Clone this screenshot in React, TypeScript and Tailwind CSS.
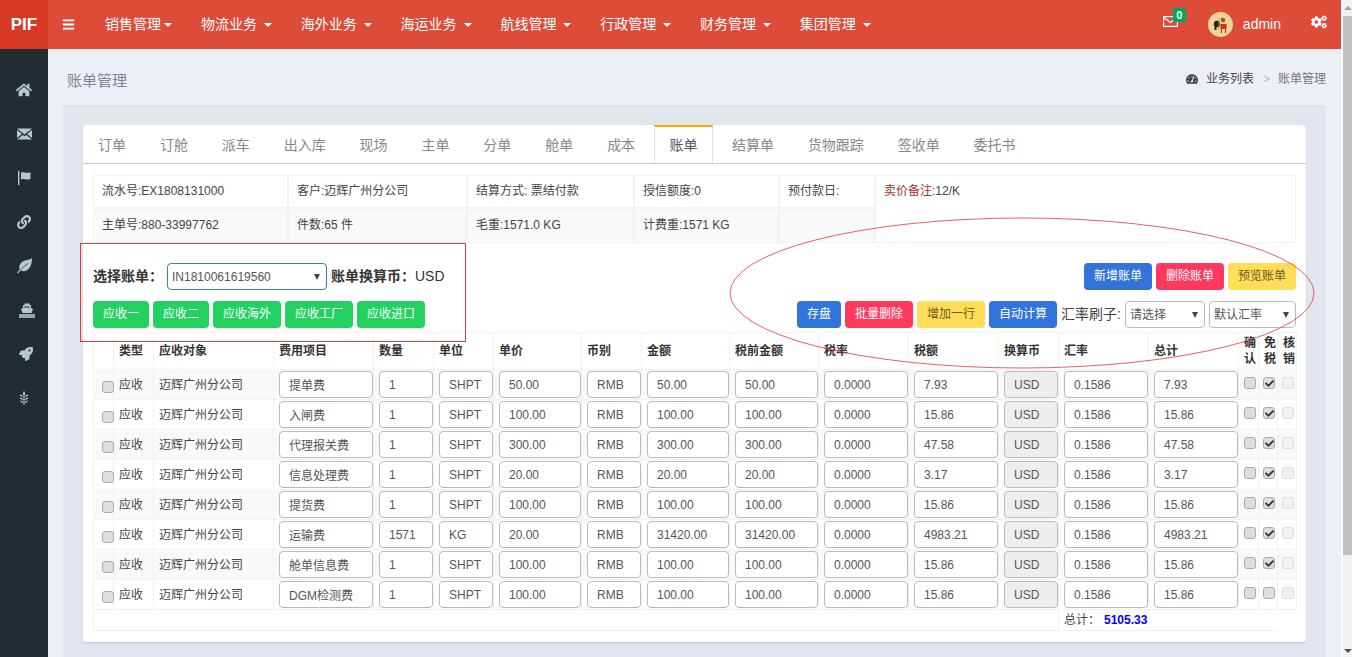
import React from "react";
import { FaHome, FaLink, FaRocket, FaBars, FaTachometerAlt, FaCogs, FaCheck } from "react-icons/fa";

const navItems = ["销售管理", "物流业务", "海外业务", "海运业务", "航线管理", "行政管理", "财务管理", "集团管理"];
const tabs = ["订单", "订舱", "派车", "出入库", "现场", "主单", "分单", "舱单", "成本", "账单", "结算单", "货物跟踪", "签收单", "委托书"];
const heads = ["", "类型", "应收对象", "费用项目", "数量", "单位", "单价", "币别", "金额", "税前金额", "税率", "税额", "换算币", "汇率", "总计"];

type Row = [string, string, string, string, string, string, string, boolean];
const rows: Row[] = [
  ["提单费", "1", "SHPT", "50.00", "50.00", "7.93", "7.93", true],
  ["入闸费", "1", "SHPT", "100.00", "100.00", "15.86", "15.86", true],
  ["代理报关费", "1", "SHPT", "300.00", "300.00", "47.58", "47.58", true],
  ["信息处理费", "1", "SHPT", "20.00", "20.00", "3.17", "3.17", true],
  ["提货费", "1", "SHPT", "100.00", "100.00", "15.86", "15.86", true],
  ["运输费", "1571", "KG", "20.00", "31420.00", "4983.21", "4983.21", true],
  ["舱单信息费", "1", "SHPT", "100.00", "100.00", "15.86", "15.86", true],
  ["DGM检测费", "1", "SHPT", "100.00", "100.00", "15.86", "15.86", false],
];

const cell = "border border-[#f2f2f2]";

function Field({ value, gray }: { value: string; gray?: boolean }) {
  return (
    <td className={`${cell} p-0 pt-px pl-[5px] align-top`}>
      <input
        readOnly
        value={value}
        className={`block w-full h-[27px] rounded-[4px] border border-[#bbbbbb] pl-[9px] text-[12px] text-[#555] ${gray ? "bg-[#eeeeee]" : "bg-white"}`}
      />
    </td>
  );
}

function Box({ checked, disabled, className }: { checked?: boolean; disabled?: boolean; className?: string }) {
  return (
    <span
      className={`flex items-center justify-center w-[12px] h-[12px] rounded-[3px] border ${disabled ? "border-[#dddddd] bg-[#f2f2f2]" : "border-[#aaaaaa] bg-[#dedede]"} ${className ?? ""}`}
    >
      {checked && <FaCheck className="text-[9px] text-[#333]" />}
    </span>
  );
}

function Btn({ label, tone }: { label: string; tone: "blue" | "red" | "yellow" | "green" }) {
  const tones = {
    blue: "bg-[#3273dc] text-white",
    red: "bg-[#ff3860] text-white",
    yellow: "bg-[#ffdd57] text-[#6b5a23]",
    green: "bg-[#23d160] text-white",
  };
  return (
    <button className={`h-[27px] px-[10px] rounded-[4px] text-[12px] leading-[27px] ${tones[tone]}`}>{label}</button>
  );
}

function Pick({ value, widthClass, border, pad }: { value: string; widthClass: string; border: string; pad: string }) {
  return (
    <div className={`relative h-[27px] ${widthClass}`}>
      <select className={`block appearance-none w-full h-full rounded-[4px] border ${border} ${pad} bg-white text-[12px] text-[#555]`}>
        <option>{value}</option>
      </select>
      <span className="absolute right-[7px] top-[11px] border-x-[3px] border-t-[6px] border-x-transparent border-t-[#444] pointer-events-none" />
    </div>
  );
}

function Avatar() {
  return (
    <svg viewBox="0 0 25 25" className="w-[25px] h-[25px]">
      <circle cx="12.5" cy="12.5" r="12.5" fill="#ecd596" />
      <circle cx="9" cy="12" r="3.2" fill="#222" />
      <rect x="6.5" y="11" width="2" height="7" fill="#222" />
      <circle cx="15" cy="8" r="2.3" fill="#8a5a2c" />
      <rect x="12.5" y="12" width="6" height="5" fill="#e2231a" />
      <rect x="13" y="17" width="1" height="4" fill="#6b4a2a" />
      <rect x="17" y="17" width="1" height="4" fill="#6b4a2a" />
      <rect x="10.5" y="6" width="1" height="12" fill="#c9a070" />
    </svg>
  );
}

function MailOutline() {
  return (
    <svg viewBox="0 0 15 11" className="w-[15px] h-[11px]" fill="none" stroke="white" strokeWidth="1.2">
      <rect x="0.6" y="0.6" width="13.8" height="9.8" />
      <path d="M0.6 1.2 7.5 6.500 14.400 1.200" />
    </svg>
  );
}

function SideMail() {
  return (
    <svg viewBox="0 0 15 12" className="w-[15px] h-[12px]" fill="#b8c7ce">
      <path d="M0 0.500h15L7.500 6.500z" />
      <path d="M0 2 5 6 0 10z" />
      <path d="M15 2 10 6l5 4z" />
      <path d="M0 11.500 5.800 7l1.700 1.300L9.200 7 15 11.500z" />
    </svg>
  );
}

function SideFlag() {
  return (
    <svg viewBox="0 0 13 14" className="w-[13px] h-[14px]" fill="#b8c7ce">
      <rect x="0" y="0" width="1.400" height="14" />
      <path d="M3 1.500C6 0.500 8 2.800 12.500 1.200V8C8 9.500 6 7.200 3 8.500z" />
    </svg>
  );
}

function SideLeaf() {
  return (
    <svg viewBox="0 0 15 16" className="w-[15px] h-[16px]" fill="#b8c7ce">
      <path d="M15 0C15 9 11 14 5 13 4.500 13 4 12.800 3.500 12.500L1 15.500 0 14.800 2.800 11.500C1 8 4 3.500 8 2.500 11 1.800 13.500 1.500 15 0z" />
      <path d="M3.500 12.500C6 9 8.500 7 11 5.500" stroke="#222d32" strokeWidth="0.7" fill="none" />
    </svg>
  );
}

function ShipIcon() {
  return (
    <svg viewBox="0 0 16 15" className="w-[16px] h-[15px]" fill="#b8c7ce">
      <path d="M5.500 0.500h5v1.500h1.500v3l2 1-1.500 4h-9l-1.500-4 2-1V2h1.500z" />
      <path d="M5.500 3.500h5V5L8 4.200 5.500 5z" fill="#222d32" />
      <rect x="0" y="11" width="16" height="4" fill="#9aa8ae" />
    </svg>
  );
}

function Wheat() {
  return (
    <svg viewBox="0 0 10 14" className="w-[10px] h-[14px]" fill="#b8c7ce">
      <path d="M5 0C6.500 1.500 6.500 3.500 5 5 3.500 3.500 3.500 1.500 5 0z" />
      <path d="M4.500 6C2.500 6 1 5 0.500 3.500 2.500 3.500 4 4.500 4.500 6z" />
      <path d="M5.500 6C7.500 6 9 5 9.500 3.500 7.500 3.500 6 4.500 5.500 6z" />
      <path d="M4.500 9C2.500 9 1 8 0.500 6.500 2.500 6.500 4 7.500 4.500 9z" />
      <path d="M5.500 9C7.500 9 9 8 9.500 6.500 7.500 6.500 6 7.500 5.500 9z" />
      <path d="M4.500 12C3 12 1.500 11 1 9.500 3 9.500 4 10.500 4.500 12z" />
      <path d="M5.500 12C7 12 8.500 11 9 9.500 7 9.500 6 10.500 5.500 12z" />
      <rect x="4.500" y="5" width="1" height="9" />
    </svg>
  );
}

const sideIcons = [
  <FaHome className="text-[16px]" />,
  <SideMail />,
  <SideFlag />,
  <FaLink className="text-[14px]" />,
  <SideLeaf />,
  <span className="ml-[5px] flex"><ShipIcon /></span>,
  <FaRocket className="text-[14px] ml-[3px]" />,
  <Wheat />,
];

export default function App() {
  return (
    <div className="flex h-[657px] w-[1352px] overflow-hidden bg-white font-['Liberation_Sans','Noto_Sans_CJK_SC',sans-serif] text-[12px] text-[#444]">
      <div className="flex flex-col w-[1341px] h-full">
        <header className="flex items-center h-[49px] shrink-0 bg-[#dd4b39] text-white">
          <div className="flex items-center justify-center w-[48px] h-full bg-[#d73925] text-[17px] font-bold">PIF</div>
          <FaBars className="ml-[14px] text-[13px]" />
          <nav className="flex ml-[30px]">
            {navItems.map((n, i) => (
              <div key={n} className={`flex items-center text-[14px] ${i === 0 ? "w-[96px]" : "w-[99.8px]"}`}>
                {n}
                <span className={`${i === 0 ? "ml-[3px]" : "ml-[7px]"} border-x-[4px] border-t-[4px] border-x-transparent border-t-white`} />
              </div>
            ))}
          </nav>
          <div className="flex items-center ml-auto pr-[14px]">
            <div className="relative mr-[30px] -mt-[6px] flex">
              <MailOutline />
              <span className="absolute -top-[8px] left-[10px] flex items-center justify-center w-[13px] h-[14px] rounded-[2px] bg-[#00a65a] text-[11px] font-bold leading-none">0</span>
            </div>
            <Avatar />
            <span className="ml-[10px] text-[14px]">admin</span>
            <FaCogs className="ml-[30px] text-[16px] -mt-[6px]" />
          </div>
        </header>

        <div className="flex flex-1 min-h-0">
          <aside className="w-[48px] shrink-0 bg-[#222d32] pt-[19px] text-[#b8c7ce]">
            {sideIcons.map((ic, i) => (
              <div key={i} className="flex items-center justify-center h-[44px]">{ic}</div>
            ))}
          </aside>

          <main className="flex-1 min-w-0 bg-[#ecf0f5] px-[15px] overflow-hidden">
            <div className="flex items-center justify-between h-[56px] pl-[4px]">
              <span className="text-[15px] text-[#7d8791] mt-[8px]">账单管理</span>
              <div className="flex items-center text-[12px] mt-[3px]">
                <FaTachometerAlt className="text-[12px] text-[#444]" />
                <span className="ml-[8px] text-[#444]">业务列表</span>
                <span className="ml-[9px] mr-[8px] text-[#bbb]">&gt;</span>
                <span className="text-[#777]">账单管理</span>
              </div>
            </div>

            <section className="rounded-t-[5px] border-t-2 border-[#dbdfe5] bg-[#e1e6ed] px-[20px] pt-[18px] pb-[30px]">
              <div className="relative h-[517px] rounded-[3px] bg-white shadow-[0_1px_2px_rgba(0,0,0,0.15)]">
                <div className="flex h-[39px] gap-[3.9px] border-b border-[#c9c3e6]">
                  {tabs.map((t) => (
                    <div
                      key={t}
                      className={`flex items-center text-[14px] ${t === "账单" ? "border-t-[2px] border-t-[#f9ad00] border-x border-x-[#dddddd] text-[#555] px-[14.5px]" : "pt-[2px] px-[15px] text-[#888]"}`}
                    >
                      {t}
                    </div>
                  ))}
                </div>

                <div className="px-[10px]">
                  <div className="mt-[11px] grid grid-cols-[195px_179px_167px_145px_96px_421px] grid-rows-[33px_35px] text-[12px] text-[#444]">
                    {["流水号:EX1808131000", "客户:迈辉广州分公司", "结算方式: 票结付款", "授信额度:0", "预付款日:"].map((t) => (
                      <div key={t} className={`${cell} pl-[8px] pt-[6px]`}>{t}</div>
                    ))}
                    <div className={`${cell} row-span-2 pl-[8px] pt-[6px]`}>
                      <span className="text-[#a5352c]">卖价备注</span>:12/K
                    </div>
                    {["主单号:880-33997762", "件数:65 件", "毛重:1571.0 KG", "计费重:1571 KG", ""].map((t, i) => (
                      <div key={i} className={`${cell} bg-[#f9f9f9] pl-[8px] pt-[7px]`}>{t}</div>
                    ))}
                  </div>

                  <div className="flex justify-between h-[89px] pt-[20px]">
                    <div>
                      <div className="flex items-center h-[27px] text-[14px] text-[#333]">
                        <span className="font-bold w-[74px]">选择账单：</span>
                        <Pick value="IN1810061619560" widthClass="w-[160px]" border="border-[#3c7fb8]" pad="pl-[4px]" />
                        <span className="ml-[4px] font-bold">账单换算币：</span>
                        <span>USD</span>
                      </div>
                      <div className="flex gap-[4px] mt-[11px]">
                        <Btn label="应收一" tone="green" />
                        <Btn label="应收二" tone="green" />
                        <Btn label="应收海外" tone="green" />
                        <Btn label="应收工厂" tone="green" />
                        <Btn label="应收进口" tone="green" />
                      </div>
                    </div>
                    <div>
                      <div className="flex justify-end gap-[4px]">
                        <Btn label="新增账单" tone="blue" />
                        <Btn label="删除账单" tone="red" />
                        <Btn label="预览账单" tone="yellow" />
                      </div>
                      <div className="flex items-center justify-end gap-[4px] mt-[11px]">
                        <Btn label="存盘" tone="blue" />
                        <Btn label="批量删除" tone="red" />
                        <Btn label="增加一行" tone="yellow" />
                        <Btn label="自动计算" tone="blue" />
                        <span className="w-[60px] whitespace-nowrap text-[14px] text-[#444]">汇率刷子:</span>
                        <Pick value="请选择" widthClass="w-[80px]" border="border-[#bbbbbb]" pad="pl-[4px]" />
                        <Pick value="默认汇率" widthClass="w-[87px]" border="border-[#bbbbbb]" pad="pl-[4px]" />
                      </div>
                    </div>
                  </div>

                  <table className="table-fixed w-[1203px] border-collapse text-[12px]">
                    <colgroup>
                      {[20, 40, 120, 100, 60, 60, 88, 60, 88, 89, 90, 90, 60, 90, 90, 20, 19, 19].map((w, i) => (
                        <col key={i} style={{ width: w }} />
                      ))}
                    </colgroup>
                    <thead>
                      <tr className="h-[37px]">
                        {heads.map((h, i) => (
                          <th key={i} className={`${cell} p-0 pl-[5px] text-left font-bold text-[#333]`}>{h}</th>
                        ))}
                        {["确认", "免税", "核销"].map((h) => (
                          <th key={h} className={`${cell} p-0 font-bold text-[#333] leading-[16px] break-all`}>
                            <span className="block w-[12px] ml-[5px]">{h}</span>
                          </th>
                        ))}
                      </tr>
                    </thead>
                    <tbody>
                      {rows.map((r, i) => (
                        <tr key={i} className={`h-[30px] ${i % 2 === 0 ? "bg-[#f9f9f9]" : ""}`}>
                          <td className={`${cell} relative p-0 align-top`}>
                            <Box className="mt-[11px] ml-[8px]" />
                          </td>
                          <td className={`${cell} p-0 pl-[5px] pt-[6px] align-top`}>应收</td>
                          <td className={`${cell} p-0 pl-[5px] pt-[6px] align-top`}>迈辉广州分公司</td>
                          <Field value={r[0]} />
                          <Field value={r[1]} />
                          <Field value={r[2]} />
                          <Field value={r[3]} />
                          <Field value="RMB" />
                          <Field value={r[4]} />
                          <Field value={r[4]} />
                          <Field value="0.0000" />
                          <Field value={r[5]} />
                          <Field value="USD" gray />
                          <Field value="0.1586" />
                          <Field value={r[6]} />
                          <td className={`${cell} p-0 align-top`}><Box className="mt-[7px] ml-[5px]" /></td>
                          <td className={`${cell} p-0 align-top`}><Box checked={r[7]} className="mt-[7px] ml-[4px]" /></td>
                          <td className={`${cell} p-0 align-top`}><Box disabled className="mt-[7px] ml-[4px]" /></td>
                        </tr>
                      ))}
                      <tr className="h-[21px]">
                        <td colSpan={13} className={cell} />
                        <td colSpan={4} className={`${cell} border-r-0 p-0 pl-[5px]`}>
                          总计：
                          <b className="ml-[4px] text-[#0000ff]">5105.33</b>
                        </td>
                        <td className="p-0" />
                      </tr>
                    </tbody>
                  </table>
                </div>

                <div className="absolute left-[-3px] top-[118px] w-[386px] h-[99px] border border-[#e8363a] pointer-events-none" />
                <svg className="absolute left-[646px] top-[92px] w-[586px] h-[152px] pointer-events-none" viewBox="0 0 586 152" fill="none">
                  <ellipse cx="293" cy="76" rx="292" ry="75" stroke="#e8363a" strokeWidth="0.8" />
                </svg>
              </div>
            </section>
          </main>
        </div>
      </div>

      <div className="flex flex-col w-[11px] pl-[2px] bg-white">
        <div className="flex items-center justify-center h-[16px] bg-[#f1f1f1]">
          <span className="border-x-[4px] border-b-[4px] border-x-transparent border-b-[#a3a3a3]" />
        </div>
        <div className="h-[539px] bg-[#c1c1c1]" />
        <div className="flex-1 bg-[#f1f1f1] flex items-end justify-center pb-[4px]">
          <span className="border-x-[4px] border-t-[4px] border-x-transparent border-t-[#505050]" />
        </div>
      </div>
    </div>
  );
}
